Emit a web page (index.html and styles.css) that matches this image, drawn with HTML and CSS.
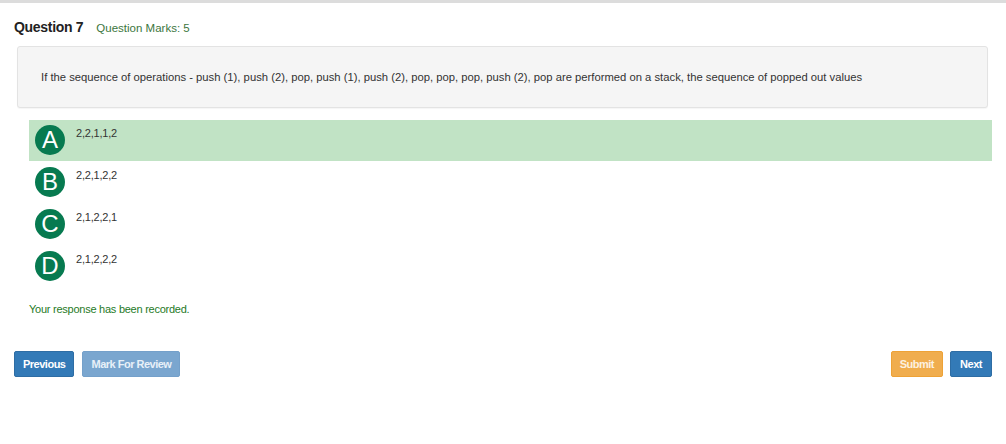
FILE: index.html
```html
<!DOCTYPE html>
<html>
<head>
<meta charset="utf-8">
<link rel="stylesheet" href="styles.css">
</head>
<body>
<div class="topbar"></div>
<div class="page">
  <div class="q-head">
    <span class="q-title">Question 7</span>
    <span class="q-marks">Question Marks: 5</span>
  </div>
  <div class="q-box">If the sequence of operations - push (1), push (2), pop, push (1), push (2), pop, pop, pop, push (2), pop are performed on a stack, the sequence of popped out values</div>
  <div class="options">
    <div class="option selected"><span class="badge">A</span><span class="opt-text">2,2,1,1,2</span></div>
    <div class="option"><span class="badge">B</span><span class="opt-text">2,2,1,2,2</span></div>
    <div class="option"><span class="badge">C</span><span class="opt-text">2,1,2,2,1</span></div>
    <div class="option"><span class="badge">D</span><span class="opt-text">2,1,2,2,2</span></div>
  </div>
  <div class="recorded">Your response has been recorded.</div>
  <div class="actions">
    <div class="left">
      <button class="btn btn-primary">Previous</button>
      <button class="btn btn-primary disabled">Mark For Review</button>
    </div>
    <div class="right">
      <button class="btn btn-warning">Submit</button>
      <button class="btn btn-primary btn-next">Next</button>
    </div>
  </div>
</div>
</body>
</html>
```
FILE: styles.css
```css
html, body {
  margin: 0;
  padding: 0;
  background: #fff;
  font-family: "Liberation Sans", Arial, sans-serif;
  color: #333;
}
.topbar {
  height: 3px;
  background: #dcdcdc;
}
.page {
  padding: 0 14px;
}
.q-head {
  margin-top: 16px;
  line-height: 16px;
  display: flex;
  align-items: baseline;
}
.q-title {
  font-size: 14px;
  font-weight: bold;
  color: #222;
  letter-spacing: -0.3px;
}
.q-marks {
  font-size: 11.5px;
  color: #3c763d;
  margin-left: 13px;
}
.q-box {
  margin: 10px 4px 0 3px;
  background: #f5f5f5;
  border: 1px solid #e3e3e3;
  border-radius: 3px;
  padding: 24px 23px 23px;
  font-size: 11.25px;
  line-height: 13px;
  color: #333;
  box-shadow: 0 1px 1px rgba(0,0,0,0.04);
}
.options {
  margin-top: 12px;
  margin-left: 15px;
}
.option {
  height: 41px;
  margin-bottom: 1px;
  display: flex;
  align-items: flex-start;
  padding-left: 6px;
  box-sizing: border-box;
}
.option.selected {
  background: #c1e3c5;
}
.badge {
  width: 30px;
  height: 30px;
  margin-top: 5px;
  border-radius: 50%;
  background: #077a50;
  color: #fff;
  font-size: 24px;
  line-height: 30px;
  text-align: center;
  flex: none;
}
.opt-text {
  margin-left: 11px;
  margin-top: 7px;
  font-size: 11px;
  line-height: 13px;
  color: #333;
  letter-spacing: -0.2px;
}
.recorded {
  margin-top: 16px;
  margin-left: 15px;
  font-size: 11px;
  line-height: 13px;
  color: #1f7a1f;
  letter-spacing: -0.25px;
}
.actions {
  margin-top: 35px;
  display: flex;
  justify-content: space-between;
}
.left, .right {
  display: flex;
  gap: 8px;
}
.right {
  gap: 7px;
}
.btn {
  height: 26px;
  border: 1px solid transparent;
  border-radius: 2px;
  padding: 0 8px;
  font-family: "Liberation Sans", Arial, sans-serif;
  font-size: 11px;
  font-weight: bold;
  letter-spacing: -0.5px;
  color: #fff;
  cursor: pointer;
}
.btn-next {
  min-width: 42px;
}
.btn-primary {
  background: #337ab7;
  border-color: #2e6da4;
}
.btn-primary.disabled {
  background: #7aa6cf;
  border-color: #74a0ca;
  color: #e8f0f8;
}
.btn-warning {
  background: #f0ad4e;
  border-color: #eea236;
  color: #fdf1e0;
}
```
